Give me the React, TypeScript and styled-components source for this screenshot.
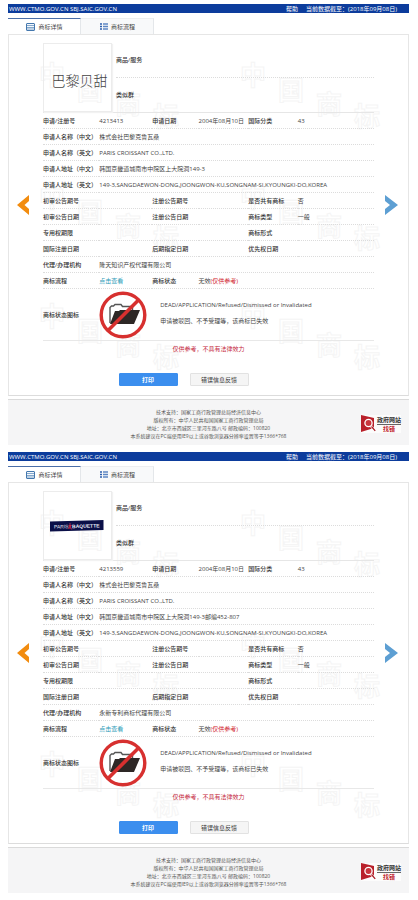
import React from "react";
import styled, { createGlobalStyle } from "styled-components";

const GlobalStyle = createGlobalStyle`
  *, *::before, *::after { box-sizing: border-box; }
  body {
    margin: 0;
    background: #fff;
    color: #444;
    font-family: "Open Sans", "Noto Sans CJK SC", sans-serif;
    font-size: 6px;
    line-height: 8px;
  }
  button { font-family: inherit; cursor: pointer; }
`;

const Page = styled.main`
  padding: 4px 9px 0 8px;
`;

const Panel = styled.section`
  display: flex;
  flex-direction: column;
  margin-bottom: 7px;
`;

const TopBar = styled.header`
  display: flex;
  align-items: center;
  height: 9px;
  padding: 0 12px 0 1px;
  background: #0c3c9c;
  color: #fff;
  white-space: nowrap;
`;

const Site = styled.span`
  flex: 1;
`;

const HelpLink = styled.a`
  margin-right: 8px;
  color: inherit;
  text-decoration: none;
`;

const Tabs = styled.nav`
  display: flex;
  height: 16px;
  margin-top: 5px;
`;

const Tab = styled.button<{ $active?: boolean }>`
  display: flex;
  align-items: center;
  justify-content: center;
  gap: 3px;
  width: 73px;
  padding: 0 0 0 1px;
  border: 0;
  border-top: 1px solid ${(p) => (p.$active ? "#4a6ea8" : "#eceef0")};
  border-right: 1px solid #e4e7ea;
  background: ${(p) => (p.$active ? "#fff" : "#f8f9fa")};
  color: #444;
  font-size: 6px;
  line-height: 8px;
`;

const Body = styled.div`
  position: relative;
  display: flex;
  padding: 8px 0 9px;
  border: 1px solid #e6e6e6;
  border-bottom-color: #dcdcdc;
`;

const Watermark = styled.svg`
  position: absolute;
  inset: 0;
  width: 100%;
  height: 100%;
  fill: none;
  stroke: #f5f5f5;
  stroke-width: 1;
  font-size: 26px;
  font-weight: 700;
  pointer-events: none;
`;

const Side = styled.div`
  position: relative;
  flex: 0 0 34px;
  display: flex;
  justify-content: center;
  align-items: flex-start;
  padding-top: 152px;
`;

const ArrowButton = styled.button<{ $shift?: boolean }>`
  display: flex;
  padding: 0 ${(p) => (p.$shift ? 6 : 0)}px 0 0;
  border: 0;
  background: none;
`;

const Content = styled.div`
  position: relative;
  flex: 1;
  min-width: 0;
`;

const Summary = styled.div`
  display: flex;
  gap: 4px;
  border-bottom: 1px solid #e6e6e6;
`;

const MarkBox = styled.div`
  display: flex;
  align-items: center;
  justify-content: center;
  width: 69px;
  height: 69px;
  padding-right: 2px;
  border: 1px solid #ececec;
  box-shadow: 1px 1px 1px #f2f2f2;
`;

const ChineseMark = styled.span`
  padding: 4px 0 0 6px;
  color: #444;
  font-family: "Noto Sans CJK SC", sans-serif;
  font-size: 14px;
  font-weight: 300;
  line-height: 18px;
  white-space: nowrap;
`;

const Banner = styled.svg`
  width: 54px;
  height: 12px;
`;

const SummaryRows = styled.div`
  flex: 1;
`;

const SummaryRow = styled.div`
  display: flex;
  align-items: center;
  height: 34px;
  color: #333;
  font-weight: 500;

  & + & {
    border-top: 1px dotted #dcdcdc;
  }
`;

const Details = styled.table`
  width: 100%;
  table-layout: fixed;
  border-collapse: separate;
  border-spacing: 0;

  th, td {
    height: 16px;
    padding: 0;
    border-bottom: 1px dotted #dcdcdc;
    text-align: left;
    vertical-align: middle;
    white-space: nowrap;
    font-weight: 400;
  }
  th { color: #333; font-weight: 500; }
  tr:last-child > * { height: 52px; border-bottom: 1px solid #e8e8e8; }
`;

const Col = styled.col<{ $share: number }>`
  width: ${(p) => p.$share}%;
`;

const FlowLink = styled.a`
  color: #2c9ab7;
  text-decoration: none;
`;

const Red = styled.span`
  color: #d0212b;
`;

const Status = styled.div`
  display: flex;
  align-items: center;
  gap: 13px;
`;

const StatusText = styled.div`
  display: flex;
  flex-direction: column;
  gap: 8px;
  padding-bottom: 4px;
`;

const Notice = styled.p`
  margin: 4px 0 20px;
  color: #c4243a;
  text-align: center;
`;

const Actions = styled.div`
  display: flex;
  justify-content: center;
  gap: 12px;
  padding-right: 50px;
`;

const Action = styled.button<{ $primary?: boolean }>`
  width: 59px;
  height: 13px;
  padding: 0;
  border: 1px solid ${(p) => (p.$primary ? "#3b8eee" : "#e2e2e2")};
  border-radius: 1px;
  background: ${(p) => (p.$primary ? "#3b8eee" : "#f5f5f5")};
  color: ${(p) => (p.$primary ? "#fff" : "#333")};
  font-size: 6px;
  font-weight: ${(p) => (p.$primary ? 700 : 400)};
  line-height: 8px;
`;

const Footer = styled.footer`
  display: grid;
  grid-template-columns: 1fr auto 1fr;
  align-items: center;
  margin-top: 3px;
  padding: 8px 8px 5px;
  border-top: 1px solid #dadada;
  background: #f5f5f6;
`;

const FooterText = styled.div`
  grid-column: 2;
  color: #555;
  font-size: 5px;
  text-align: center;
  white-space: nowrap;

  p { margin: 0; }
`;

const ReportLink = styled.a`
  display: flex;
  align-items: center;
  justify-self: end;
  gap: 1px;
  color: #333;
  font-weight: 700;
  line-height: 8px;
  text-align: center;
  text-decoration: none;
  background: #fcfcfc;
`;

const ReportTop = styled.span`
  display: block;
  border-bottom: 1px solid #666;
`;

const ReportBottom = styled.span`
  display: block;
  color: #c02028;
`;

const DetailIcon = () => (
  <svg width="9" height="8" viewBox="0 0 9 8" aria-hidden="true">
    <rect x="0.5" y="0.5" width="8" height="7" rx="0.5" fill="#f4f8fc" stroke="#4478ae" />
    <path d="M1 2.5h7M1 4.5h7M1 6h7" stroke="#6793bf" strokeWidth="0.8" />
  </svg>
);

const FlowIcon = () => (
  <svg width="8" height="7" viewBox="0 0 8 7" aria-hidden="true">
    <path d="M0 1h2M0 3.5h2M0 6h2" stroke="#2d5fae" strokeWidth="1.5" />
    <path d="M3 1h5M3 3.5h5M3 6h5" stroke="#5d86c3" strokeWidth="1.3" />
  </svg>
);

const MarkWatermark = () => {
  const glyphs: [string, number, number][] = [
    ["中", 30, 50],
    ["国", 68, 65],
    ["商", 106, 79],
    ["标", 144, 91],
  ];
  return (
    <Watermark aria-hidden="true">
      {[0, 122, 241].map((dy) =>
        [0, 201].map((dx) => (
          <g key={`${dx}-${dy}`}>
            {glyphs.map(([glyph, x, y]) => (
              <text key={glyph} x={x + dx} y={y + dy}>
                {glyph}
              </text>
            ))}
          </g>
        ))
      )}
    </Watermark>
  );
};

const ForbiddenFolder = () => (
  <svg width="48" height="48" viewBox="0 0 48 48" aria-hidden="true">
    <circle cx="24" cy="24" r="21.5" fill="#fff" />
    <path
      d="M11 32V16.5l1.5-1.5h2l1.5-1.5h6l1.5 2h10v4"
      fill="#fff"
      stroke="#555"
      strokeWidth="1.4"
    />
    <path d="M11 33l5-13h4l1-1h20l-6 14z" fill="#2d2725" />
    <circle cx="24" cy="24" r="21.8" fill="none" stroke="#d7302f" strokeWidth="3.4" />
    <path d="M9 39.5L39.5 9" stroke="#d7302f" strokeWidth="3.6" />
  </svg>
);

const BaguetteMark = () => (
  <Banner viewBox="0 0 54 12" role="img" aria-label="PARIS BAQUETTE">
    <path d="M0 1.5L53.5 0v10L0 11.5z" fill="#0b1048" />
    <g transform="rotate(-1.5 27 6)" fill="#e6e6f2" fontFamily="Liberation Sans" fontSize="5">
      <text x="4" y="8">PARIS</text>
      <text x="22" y="8" fontWeight="700">BAQUETTE</text>
    </g>
    <path d="M20 3v6M18.5 9l1.5-3 1.7 3.5M18.7 5.5h3" stroke="#d52c48" strokeWidth="0.8" fill="none" />
  </Banner>
);

const ReportIcon = () => (
  <svg width="15" height="18" viewBox="0 0 15 18" aria-hidden="true">
    <path d="M0 0l13 3v10L0 17z" fill="#b9202a" />
    <circle cx="7.5" cy="8" r="3.6" fill="#c9353c" stroke="#fff" strokeWidth="1.3" />
    <path d="M10 11l4 5" stroke="#fff" strokeWidth="2.6" />
    <path d="M10.5 11.5l3.7 4.3" stroke="#a81c25" strokeWidth="1.3" />
  </svg>
);

type RecordData = {
  id: string;
  mark: React.ReactNode;
  number: string;
  addressCn: string;
  agent: string;
};

const records: RecordData[] = [
  {
    id: "first",
    mark: <ChineseMark>巴黎贝甜</ChineseMark>,
    number: "4213413",
    addressCn: "韩国京畿道城南市中院区上大院洞149-3",
    agent: "隆天知识产权代理有限公司",
  },
  {
    id: "second",
    mark: <BaguetteMark />,
    number: "4213559",
    addressCn: "韩国京畿道城南市中院区上大院洞149-3邮编452-807",
    agent: "永新专利商标代理有限公司",
  },
];

type Cell = [label: string, value?: React.ReactNode];

const detailRows = (r: RecordData): Cell[][] => [
  [["申请/注册号", r.number], ["申请日期", "2004年08月10日"], ["国际分类", "43"]],
  [["申请人名称（中文）", "株式会社巴黎克鲁瓦桑"]],
  [["申请人名称（英文）", "PARIS CROISSANT CO.,LTD."]],
  [["申请人地址（中文）", r.addressCn]],
  [["申请人地址（英文）", "149-3,SANGDAEWON-DONG,JOONGWON-KU,SONGNAM-SI,KYOUNGKI-DO,KOREA"]],
  [["初审公告期号"], ["注册公告期号"], ["是否共有商标", "否"]],
  [["初审公告日期"], ["注册公告日期"], ["商标类型", "一般"]],
  [["专用权期限"], [""], ["商标形式"]],
  [["国际注册日期"], ["后期指定日期"], ["优先权日期"]],
  [["代理/办理机构", r.agent]],
  [
    ["商标流程", <FlowLink href="#flow">点击查看</FlowLink>],
    ["商标状态", <>无效<Red>(仅供参考)</Red></>],
  ],
];

const RecordPanel = ({ record }: { record: RecordData }) => (
  <Panel>
    <TopBar>
      <Site>WWW.CTMO.GOV.CN SBJ.SAIC.GOV.CN</Site>
      <HelpLink href="#help">帮助</HelpLink>
      <span>当前数据截至：(2018年09月08日)</span>
    </TopBar>
    <Tabs>
      <Tab type="button" $active>
        <DetailIcon />
        商标详情
      </Tab>
      <Tab type="button">
        <FlowIcon />
        商标流程
      </Tab>
    </Tabs>
    <Body>
      <MarkWatermark />
      <Side>
        <ArrowButton type="button" aria-label="上一条" $shift>
          <svg width="12" height="20" viewBox="0 0 12 20">
            <path d="M12 0v6L7.5 10l4.5 4v6L0 10z" fill="#f28c0f" />
          </svg>
        </ArrowButton>
      </Side>
      <Content>
        <Summary>
          <MarkBox>{record.mark}</MarkBox>
          <SummaryRows>
            <SummaryRow>商品/服务</SummaryRow>
            <SummaryRow>类似群</SummaryRow>
          </SummaryRows>
        </Summary>
        <Details>
          <colgroup>
            {[17, 16, 14, 15, 15, 23].map((share, i) => (
              <Col key={i} $share={share} />
            ))}
          </colgroup>
          <tbody>
            {detailRows(record).map((cells, i) => (
              <tr key={i}>
                {cells.map(([label, value], j) => (
                  <React.Fragment key={j}>
                    {label ? <th scope="row">{label}</th> : <td />}
                    <td colSpan={j === cells.length - 1 ? 7 - cells.length * 2 : 1}>{value}</td>
                  </React.Fragment>
                ))}
              </tr>
            ))}
            <tr>
              <th scope="row">商标状态图标</th>
              <td colSpan={5}>
                <Status>
                  <ForbiddenFolder />
                  <StatusText>
                    <span>DEAD/APPLICATION/Refused/Dismissed or Invalidated</span>
                    <span>申请被驳回、不予受理等，该商标已失效</span>
                  </StatusText>
                </Status>
              </td>
            </tr>
          </tbody>
        </Details>
        <Notice>仅供参考，不具有法律效力</Notice>
        <Actions>
          <Action type="button" $primary>打印</Action>
          <Action type="button">错误信息反馈</Action>
        </Actions>
      </Content>
      <Side>
        <ArrowButton type="button" aria-label="下一条">
          <svg width="13" height="20" viewBox="0 0 13 20">
            <path d="M0 0l13 10L0 20v-6l5-4-5-4z" fill="#5d9fd3" />
          </svg>
        </ArrowButton>
      </Side>
    </Body>
    <Footer>
      <FooterText>
        <p>技术支持：国家工商行政管理总局经济信息中心</p>
        <p>版权所有：中华人民共和国国家工商行政管理总局</p>
        <p>地址：北京市西城区三里河东路八号 邮政编码：100820</p>
        <p>本系统建议在PC端使用IE9以上或谷歌浏览器分辨率设置等于1366*768</p>
      </FooterText>
      <ReportLink href="#report">
        <ReportIcon />
        <span>
          <ReportTop>政府网站</ReportTop>
          <ReportBottom>找错</ReportBottom>
        </span>
      </ReportLink>
    </Footer>
  </Panel>
);

export default function App() {
  return (
    <>
      <GlobalStyle />
      <Page>
        {records.map((record) => (
          <RecordPanel key={record.id} record={record} />
        ))}
      </Page>
    </>
  );
}
